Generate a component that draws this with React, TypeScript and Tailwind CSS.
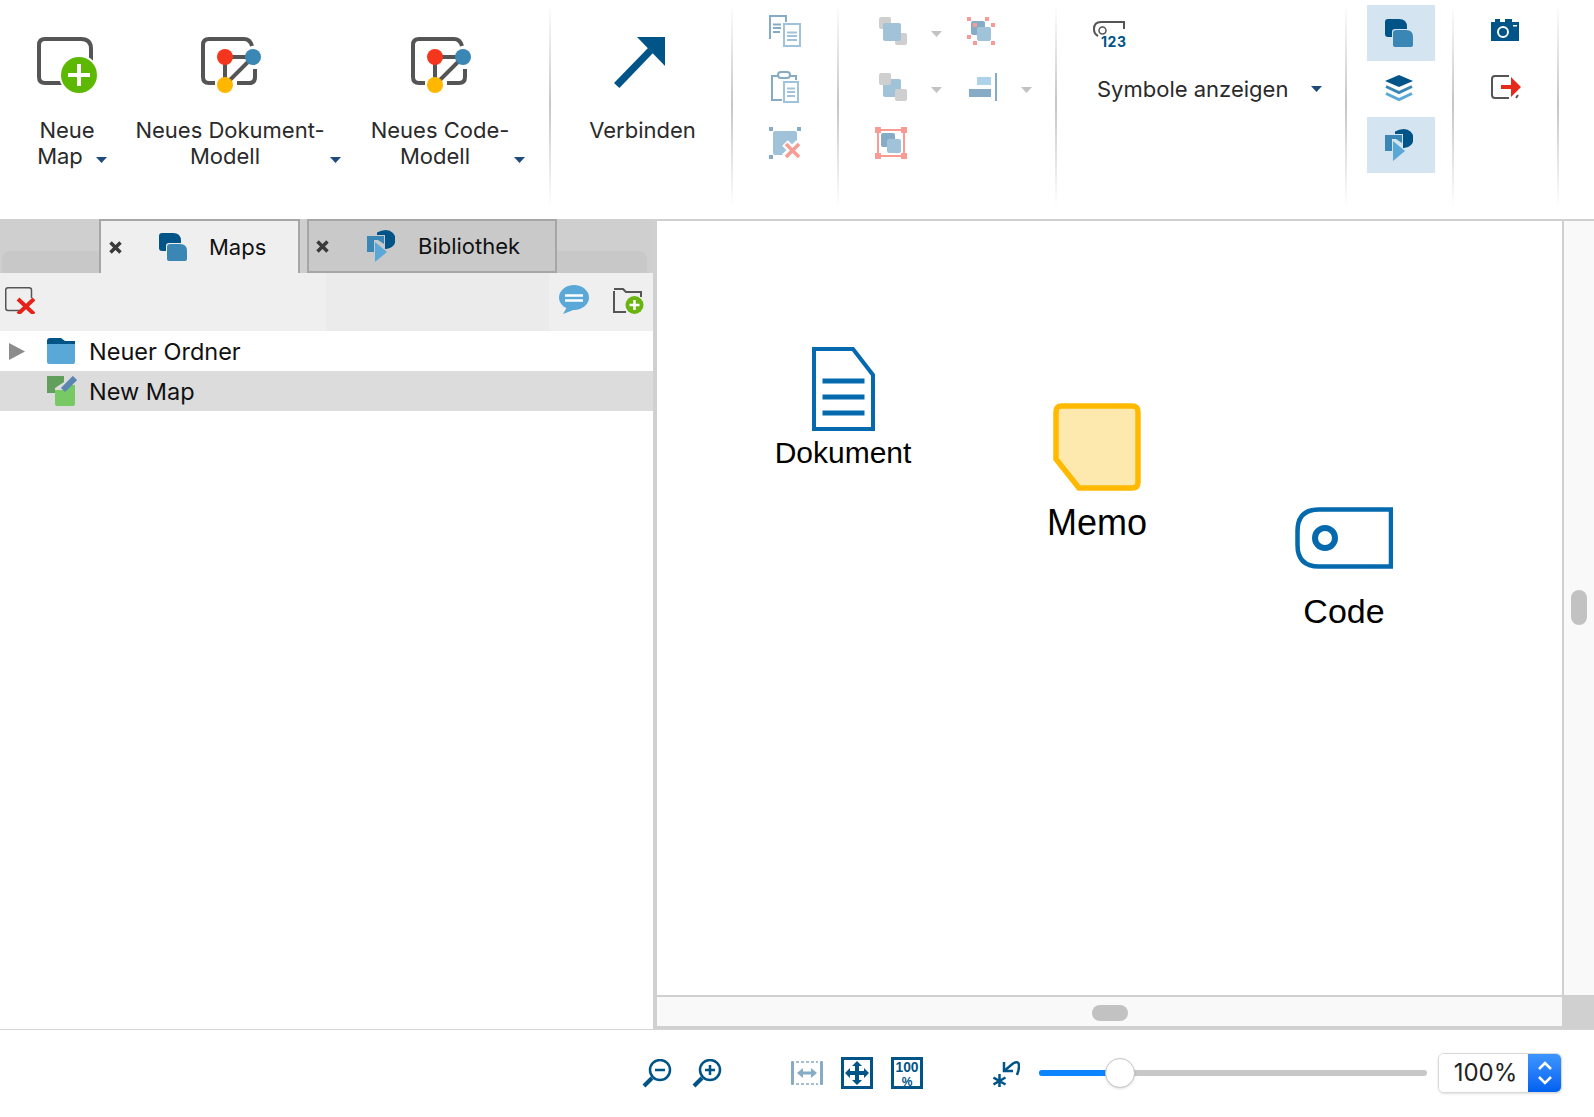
import type { ReactNode } from "react";

const navy = "#005487";
const mid = "#3a86b5";
const sky = "#5aa8d8";
const pale = "#a0c3da";
const dusk = "#86abc6";
const salmon = "#f79b94";
const grey = "#555555";

function Divider() {
  return <div className="w-[2px] h-[204px] mt-[3px] shrink-0 bg-linear-to-b from-white via-[#c6c6c6] to-white" />;
}

function Caret({ color = "#1f4a7c" }: { color?: string }) {
  return (
    <svg width="11" height="6" viewBox="0 0 11 6" className="block">
      <path d="M0 0H11L5.5 6Z" fill={color} />
    </svg>
  );
}

function NewMapIcon() {
  return (
    <svg width="60" height="56" viewBox="0 0 60 56" className="block">
      <path d="M10 46H8Q2 46 2 40V8Q2 2 8 2H44Q54 2 54 12V40Q54 46 48 46Z" fill="none" stroke={grey} strokeWidth="4" />
      <circle cx="42" cy="38" r="20" fill="#fff" />
      <circle cx="42" cy="38" r="18" fill="#5cb800" />
      <path d="M42 27V49M31 38H53" stroke="#fff" strokeWidth="4" />
    </svg>
  );
}

function ModelIcon() {
  return (
    <svg width="60" height="56" viewBox="0 0 60 56" className="block ml-[2px]">
      <path d="M51 9Q49 2 43 2H8Q2 2 2 8V40Q2 46 8 46H14" fill="none" stroke={grey} strokeWidth="4" />
      <path d="M36 46H48Q54 46 54 40V32" fill="none" stroke={grey} strokeWidth="4" />
      <path d="M24 20H52L24 48Z" fill="none" stroke={grey} strokeWidth="4" />
      <circle cx="24" cy="20" r="8" fill="#f4361f" />
      <circle cx="52" cy="20" r="8" fill={mid} />
      <circle cx="24" cy="48" r="8" fill="#ffb700" />
    </svg>
  );
}

function MapsIcon() {
  return (
    <svg width="28" height="28" viewBox="0 0 28 28" className="block">
      <path d="M0 3Q0 0 3 0H14Q22 0 22 8V10H10Q7 10 7 13V18H3Q0 18 0 15Z" fill={navy} />
      <path d="M8 14Q8 11 11 11H21Q28 11 28 18V26Q28 28 26 28H10Q8 28 8 26Z" fill={mid} />
    </svg>
  );
}

function LibraryIcon() {
  return (
    <svg width="28" height="32" viewBox="0 0 28 32" className="block">
      <path d="M10 2.500Q14 0 19 0A9.500 9.500 0 0 1 19 19H18V5H10Z" fill={navy} />
      <path d="M0 6H17V14L11 10H7V22H0Z" fill={mid} />
      <path d="M8 12L20 22L8 32Z" fill={sky} />
    </svg>
  );
}

function ToolLabel({ first, second, shift, caret }: { first: string; second: string; shift: number; caret: string }) {
  return (
    <div className="mt-[24px] text-center text-[22px] leading-[26px] text-[#2a2a2a] w-full">
      <div>{first}</div>
      <div className="relative">
        <span className={shift === 7 ? "pr-[14px]" : "pr-[10px]"}>{second}</span>
        <span className={`absolute top-[14px] ${caret}`}>
          <Caret />
        </span>
      </div>
    </div>
  );
}

function CreateSection() {
  return (
    <div className="w-[549px] shrink-0 flex pt-[37px]">
      <div className="w-[134px] flex flex-col items-center">
        <NewMapIcon />
        <ToolLabel first="Neue" second="Map" shift={7} caret="left-[96px]" />
      </div>
      <div className="w-[192px] flex flex-col items-center">
        <ModelIcon />
        <ToolLabel first="Neues Dokument-" second="Modell" shift={5} caret="left-[196px]" />
      </div>
      <div className="w-[196px] ml-[16px] flex flex-col items-center">
        <ModelIcon />
        <ToolLabel first="Neues Code-" second="Modell" shift={5} caret="left-[172px]" />
      </div>
    </div>
  );
}

function ConnectSection() {
  return (
    <div className="w-[180px] shrink-0 flex flex-col items-center pt-[37px]">
      <svg width="51" height="52" viewBox="0 0 51 52" className="block mr-[4px]">
        <path d="M23 0H51V29Z" fill={navy} />
        <path d="M0 46L5.400 51L39 16L34 11Z" fill={navy} />
      </svg>
      <div className="mt-[28px] ml-[3px] text-[22px] leading-[26px] text-[#2a2a2a]">Verbinden</div>
    </div>
  );
}

function ClipboardSection() {
  return (
    <div className="w-[104px] shrink-0 flex flex-col gap-[24px] pl-[36px] pt-[15px]">
      <svg width="32" height="32" viewBox="0 0 32 32" className="block">
        <path d="M1 24V1H17V7" fill="none" stroke={dusk} strokeWidth="2" />
        <path d="M4 9.500H12M4 13H12M4 17H11" stroke={dusk} strokeWidth="2" />
        <rect x="15" y="9" width="16" height="22" fill="#fff" stroke={pale} strokeWidth="2" />
        <path d="M18 17.500H28M18 21H28M18 25H28" stroke={pale} strokeWidth="2" />
      </svg>
      <svg width="32" height="32" viewBox="0 0 32 32" className="block">
        <path d="M13 29H3V5H27V9" fill="none" stroke={dusk} strokeWidth="2" />
        <rect x="9" y="1" width="12" height="6" rx="3" fill="#fff" stroke={dusk} strokeWidth="2" />
        <rect x="15" y="11" width="14" height="20" fill="#fff" stroke={pale} strokeWidth="2" />
        <path d="M18 17.500H26M18 21H26M18 25H26" stroke={pale} strokeWidth="2" />
      </svg>
      <svg width="32" height="32" viewBox="0 0 32 32" className="block">
        <path d="M0 0H4V4H0ZM28 0H32V4H28ZM0 28H4V32H0Z" fill={dusk} />
        <rect x="4" y="4" width="24" height="24" rx="2" fill={pale} />
        <path d="M16 16L30 30M30 16L16 30" stroke="#fff" strokeWidth="8" />
        <path d="M17 17L30 30M30 17L17 30" stroke={salmon} strokeWidth="3.500" />
      </svg>
    </div>
  );
}

function ArrangeSection() {
  return (
    <div className="w-[216px] shrink-0 pl-[40px] pt-[17px]">
      <div className="h-[56px] flex items-start">
        <svg width="28" height="28" viewBox="0 0 28 28" className="block">
          <rect width="12" height="12" rx="2" fill="#cfcfcf" />
          <rect x="16" y="16" width="12" height="12" rx="2" fill="#cfcfcf" />
          <rect x="4" y="6" width="18" height="18" rx="2" fill={pale} />
        </svg>
        <span className="ml-[24px] mt-[14px]">
          <Caret color="#c2c2c2" />
        </span>
        <svg width="28" height="28" viewBox="0 0 28 28" className="block ml-[25px]">
          <rect x="4" y="4" width="14" height="14" rx="2" fill={dusk} />
          <rect x="10" y="10" width="14" height="14" rx="2" fill={pale} />
          <path d="M0 0h4v4H0zM18 0h4v4h-4zM24 6h4v4h-4zM6 6h4v4H6zM0 18h4v4H0zM6 24h4v4H6zM24 24h4v4h-4z" fill={salmon} />
        </svg>
      </div>
      <div className="h-[56px] flex items-start">
        <svg width="28" height="28" viewBox="0 0 28 28" className="block">
          <rect x="4" y="6" width="18" height="18" rx="2" fill={pale} />
          <rect width="12" height="12" rx="2" fill="#cfcfcf" />
          <rect x="16" y="16" width="12" height="12" rx="2" fill="#cfcfcf" />
        </svg>
        <span className="ml-[24px] mt-[14px]">
          <Caret color="#c2c2c2" />
        </span>
        <svg width="28" height="28" viewBox="0 0 28 28" className="block ml-[27px]">
          <rect x="8" y="4" width="14" height="8" fill="#aed2ea" />
          <rect y="16" width="22" height="8" fill={dusk} />
          <rect x="26" width="2" height="28" fill={dusk} />
        </svg>
        <span className="ml-[24px] mt-[14px]">
          <Caret color="#c2c2c2" />
        </span>
      </div>
      <svg width="32" height="32" viewBox="0 0 32 32" className="block -mt-[2px] -ml-[4px]">
        <rect x="3" y="3" width="26" height="26" fill="none" stroke={salmon} strokeWidth="2" />
        <path d="M0 0h6v6H0zM26 0h6v6h-6zM0 26h6v6H0zM26 26h6v6h-6z" fill={salmon} />
        <rect x="6" y="6" width="14" height="14" rx="2" fill={dusk} />
        <rect x="12" y="12" width="14" height="14" rx="2" fill={pale} />
      </svg>
    </div>
  );
}

function SymbolsSection() {
  return (
    <div className="w-[288px] shrink-0 pt-[21px]">
      <svg width="40" height="31" viewBox="0 0 40 31" className="block ml-[36px]">
        <path d="M31 8V1H8Q1 1 1 8Q1 13 5 15" fill="none" stroke={grey} strokeWidth="2" />
        <circle cx="9.500" cy="9.500" r="3.500" fill="none" stroke={grey} strokeWidth="1.500" />
        <text x="8" y="26" fontSize="14" fontWeight="700" fill={navy} fontFamily="Inter, sans-serif" textLength="25">
          123
        </text>
      </svg>
      <div className="mt-[24px] ml-[40px] flex items-center text-[22px] leading-[26px] text-[#2a2a2a]">
        <span>Symbole anzeigen</span>
        <span className="ml-[23px]">
          <Caret />
        </span>
      </div>
    </div>
  );
}

function ViewSection() {
  return (
    <div className="w-[105px] shrink-0 pl-[20px] pt-[5px]">
      <div className="w-[68px] h-[56px] bg-[#d4e4f1] flex items-center justify-center pr-[4px]">
        <MapsIcon />
      </div>
      <div className="w-[68px] h-[56px] flex items-center justify-center pr-[4px]">
        <svg width="28" height="28" viewBox="0 0 28 28" className="block">
          <path d="M14 0L28 6L14 12L0 6Z" fill={navy} />
          <path d="M1 11.500L14 17.500L27 11.500" fill="none" stroke={mid} strokeWidth="3" />
          <path d="M1 18.500L14 24.500L27 18.500" fill="none" stroke={sky} strokeWidth="3" />
        </svg>
      </div>
      <div className="w-[68px] h-[56px] bg-[#d4e4f1] flex items-center justify-center pr-[4px]">
        <LibraryIcon />
      </div>
    </div>
  );
}

function OutputSection() {
  return (
    <div className="w-[103px] shrink-0 pl-[37px] pt-[19px]">
      <svg width="28" height="22" viewBox="0 0 28 22" className="block">
        <path d="M0 3H4V0H9V3H14V0H21V3H28V22H0Z" fill={navy} />
        <circle cx="12" cy="13" r="5" fill="none" stroke="#fff" strokeWidth="2" />
        <rect x="22" y="6" width="4" height="1.500" fill="#fff" />
      </svg>
      <svg width="30" height="24" viewBox="0 0 30 24" className="block mt-[34px]">
        <path d="M18 1H4Q1 1 1 4V20Q1 23 4 23H18M25 23L27 20" fill="none" stroke={grey} strokeWidth="2" />
        <path d="M10 10H20V2L30 12L20 22V14H10Z" fill="#e52a1c" />
      </svg>
    </div>
  );
}

function Toolbar() {
  return (
    <div className="h-[219px] shrink-0 flex bg-white">
      <CreateSection />
      <Divider />
      <ConnectSection />
      <Divider />
      <ClipboardSection />
      <Divider />
      <ArrangeSection />
      <Divider />
      <SymbolsSection />
      <Divider />
      <ViewSection />
      <Divider />
      <OutputSection />
      <Divider />
    </div>
  );
}

function CloseMark() {
  return (
    <svg width="13" height="13" viewBox="0 0 13 13" className="block shrink-0">
      <path d="M1.500 1.500L11.500 11.500M11.500 1.500L1.500 11.500" stroke="#3a3a3a" strokeWidth="3.500" />
    </svg>
  );
}

function Tab({ label, icon, active, className }: { label: string; icon: ReactNode; active?: boolean; className: string }) {
  return (
    <div
      className={`h-[54px] shrink-0 flex items-center border-[2px] border-[#a6a6a6] ${
        active ? "bg-[#efefef] border-b-0" : "bg-[#c9c9c9]"
      } ${className}`}
    >
      <CloseMark />
      {icon}
      <span className="text-[22px] leading-[26px] text-[#111]">{label}</span>
    </div>
  );
}

function LeftPanel() {
  return (
    <div className="w-[653px] shrink-0 flex flex-col bg-white">
      <div className="h-[54px] shrink-0 flex items-end bg-[#cfcfcf]">
        <div className="w-[97px] h-[22px] ml-[2px] mr-[0px] rounded-tl-lg bg-[#c8c8c8] shrink-0" />
        <Tab
          label="Maps"
          active
          className="w-[201px] pl-[8px]"
          icon={
            <span className="ml-[37px] mr-[22px]">
              <MapsIcon />
            </span>
          }
        />
        <div className="w-[7px] shrink-0" />
        <Tab
          label="Bibliothek"
          className="w-[250px] pl-[7px]"
          icon={
            <span className="ml-[38px] mr-[23px]">
              <LibraryIcon />
            </span>
          }
        />
        <div className="w-[90px] h-[22px] rounded-tr-lg bg-[#c8c8c8] shrink-0" />
      </div>
      <div className="h-[58px] shrink-0 flex bg-[#efefef]">
        <div className="w-[326px] pl-[5px] pt-[14px]">
          <svg width="30" height="27" viewBox="0 0 30 27" className="block">
            <path d="M16 23.500H3Q.75 23.500 .75 21V3Q.75 .75 3 .75H24Q26.500 .75 26.500 3V11" fill="none" stroke={grey} strokeWidth="1.500" />
            <path d="M13 12L29 27M29 12L13 27" stroke="#e8201a" strokeWidth="4" />
          </svg>
        </div>
        <div className="w-[223px] bg-[#ebebeb]" />
        <div className="flex-1 flex pl-[10px] pt-[12px]">
          <svg width="30" height="29" viewBox="0 0 30 29" className="block">
            <ellipse cx="15" cy="12.500" rx="15" ry="12.500" fill={sky} />
            <path d="M8 22L4 29L17 24Z" fill={sky} />
            <path d="M6 10.500H24M6 15.500H24" stroke="#fff" strokeWidth="2.500" />
          </svg>
          <svg width="31" height="27" viewBox="0 0 31 27" className="block ml-[24px] mt-[2px]">
            <path d="M1 4V25H13M28 10V5H13L10 2H1" fill="none" stroke={grey} strokeWidth="2" />
            <circle cx="21.500" cy="18" r="9" fill="#69b40f" />
            <path d="M21.500 13V23M16.500 18H26.500" stroke="#fff" strokeWidth="2.500" />
          </svg>
        </div>
      </div>
      <div className="h-[40px] shrink-0 flex items-center">
        <svg width="16" height="17" viewBox="0 0 16 17" className="block ml-[9px]">
          <path d="M0 0L16 8.500L0 17Z" fill="#8c8c8c" />
        </svg>
        <svg width="28" height="26" viewBox="0 0 28 26" className="block ml-[22px]">
          <path d="M0 3Q0 0 3 0H14L18 3H28V7H0Z" fill={navy} />
          <path d="M0 6H28V24Q28 26 26 26H2Q0 26 0 24Z" fill={sky} />
        </svg>
        <span className="ml-[14px] pt-[2px] text-[23.500px] leading-[28px] text-[#111]">Neuer Ordner</span>
      </div>
      <div className="h-[40px] shrink-0 flex items-center bg-[#dcdcdc]">
        <svg width="30" height="30" viewBox="0 0 30 30" className="block ml-[47px]">
          <path d="M0 0H17V6L8 12V17H0Z" fill="#639f5c" />
          <path d="M8 14H15L21 9H28V28Q28 30 26 30H10Q8 30 8 28Z" fill="#76c963" />
          <path d="M28 2L16 14" stroke="#5b86b3" strokeWidth="6" />
        </svg>
        <span className="ml-[12px] pt-[2px] text-[23.500px] leading-[28px] text-[#111]">New Map</span>
      </div>
      <div className="flex-1" />
    </div>
  );
}

function MapNode({ label, icon, className, labelClass }: { label: string; icon: ReactNode; className: string; labelClass: string }) {
  return (
    <div className={`absolute flex flex-col items-center font-['Liberation_Sans',sans-serif] text-black leading-none ${className}`}>
      {icon}
      <div className={labelClass}>{label}</div>
    </div>
  );
}

function Canvas() {
  return (
    <div className="flex-1 flex flex-col min-w-0">
      <div className="h-[2px] shrink-0 bg-[#d0d0d0]" />
      <div className="flex-1 flex min-h-0">
        <div className="relative flex-1 bg-white">
          <MapNode
            label="Dokument"
            className="left-[118px] top-[126px] w-[136px]"
            labelClass="mt-[7px] text-[30px]"
            icon={
              <svg width="63" height="84" viewBox="0 0 63 84" className="block">
                <path d="M2 2H41L61 28V82H2Z" fill="#fff" stroke="#0569ad" strokeWidth="4" />
                <path d="M10.500 34H52.500M10.500 50H52.500M10.500 66H52.500" stroke="#0569ad" strokeWidth="5" />
              </svg>
            }
          />
          <MapNode
            label="Memo"
            className="left-[390px] top-[182px] w-[100px]"
            labelClass="mt-[14px] text-[36px]"
            icon={
              <svg width="88" height="88" viewBox="0 0 88 88" className="block">
                <path d="M9 3H79Q85 3 85 9V79Q85 85 79 85H26L3 56V9Q3 3 9 3Z" fill="#fde9ad" stroke="#ffb900" strokeWidth="5.500" />
              </svg>
            }
          />
          <MapNode
            label="Code"
            className="left-[638px] top-[286px] w-[98px]"
            labelClass="mt-[25px] text-[34px]"
            icon={
              <svg width="98" height="62" viewBox="0 0 98 62" className="block">
                <path d="M96 2.500H24Q2.500 2.500 2.500 24V38Q2.500 59.500 24 59.500H96Z" fill="#fff" stroke="#0569ad" strokeWidth="4.500" />
                <circle cx="30" cy="31" r="10" fill="#fff" stroke="#0569ad" strokeWidth="6" />
              </svg>
            }
          />
        </div>
        <div className="w-[32px] shrink-0 bg-[#f9f9f9] border-l-[2px] border-[#d0d0d0] relative">
          <div className="absolute left-[7px] top-[369px] w-[16px] h-[35px] rounded-lg bg-[#c2c2c2]" />
        </div>
      </div>
      <div className="h-[34px] shrink-0 flex">
        <div className="flex-1 flex flex-col">
          <div className="h-[2px] bg-[#d0d0d0]" />
          <div className="flex-1 bg-[#f9f9f9] flex items-center pl-[435px] pt-[2px]">
            <div className="w-[36px] h-[16px] rounded-lg bg-[#c2c2c2]" />
          </div>
          <div className="h-[3px] bg-[#d0d0d0]" />
        </div>
        <div className="w-[32px] bg-[#d0d0d0]" />
      </div>
    </div>
  );
}

function Footer() {
  return (
    <div className="flex-1 flex items-center border-t-[1px] border-[#d4d4d4] bg-white pl-[642px] pb-[1px]">
      <svg width="30" height="29" viewBox="0 0 30 29" className="block">
        <circle cx="18" cy="11" r="10" fill="none" stroke={navy} strokeWidth="2.500" />
        <path d="M13 11H23" stroke={navy} strokeWidth="2.500" />
        <path d="M2 27L10 19" stroke={navy} strokeWidth="4" />
      </svg>
      <svg width="30" height="29" viewBox="0 0 30 29" className="block ml-[20px]">
        <circle cx="18" cy="11" r="10" fill="none" stroke={navy} strokeWidth="2.500" />
        <path d="M13 11H23M18 6V16" stroke={navy} strokeWidth="2.500" />
        <path d="M2 27L10 19" stroke={navy} strokeWidth="4" />
      </svg>
      <svg width="32" height="24" viewBox="0 0 32 24" className="block ml-[69px]">
        <rect width="3" height="24" rx="1" fill={dusk} />
        <rect x="29" width="3" height="24" rx="1" fill={dusk} />
        <path d="M5 1H27M5 23H27" stroke={dusk} strokeWidth="1.500" strokeDasharray="3 2" />
        <path d="M6 12L12 7V10.500H20V7L26 12L20 17V13.500H12V17Z" fill={dusk} />
      </svg>
      <svg width="32" height="32" viewBox="0 0 32 32" className="block ml-[18px]">
        <rect x="1.500" y="1.500" width="29" height="29" fill="none" stroke={navy} strokeWidth="3" />
        <path d="M16 4L21 9H18V14H23V11L28 16L23 21V18H18V23H21L16 28L11 23H14V18H9V21L4 16L9 11V14H14V9H11Z" fill={navy} />
      </svg>
      <svg width="32" height="32" viewBox="0 0 32 32" className="block ml-[18px]">
        <rect x="1.500" y="1.500" width="29" height="29" fill="none" stroke={navy} strokeWidth="3" />
        <text x="4.500" y="15" fontSize="14" fontWeight="700" fill={navy} fontFamily="Liberation Sans, sans-serif" textLength="23" lengthAdjust="spacingAndGlyphs">
          100
        </text>
        <text x="16" y="28.500" textAnchor="middle" fontSize="12" fontWeight="700" fill={navy} fontFamily="Liberation Sans, sans-serif">
          %
        </text>
      </svg>
      <svg width="27" height="27" viewBox="0 0 27 27" className="block ml-[70px]">
        <path d="M6.500 14V28M.5 17.500L12.500 24.500M12.500 17.500L.5 24.500" stroke={navy} strokeWidth="2.500" />
        <path d="M11 11L20 3.500Q26 0 26 6Q26 10 24 15" fill="none" stroke={navy} strokeWidth="2.500" />
        <path d="M11 2V11H20" fill="none" stroke={navy} strokeWidth="2.500" />
      </svg>
      <div className="relative w-[388px] h-[6px] ml-[19px] rounded-full bg-[#c8c8c8]">
        <div className="h-full w-[70px] rounded-l-full bg-[#0a84ff]" />
        <div className="absolute left-[66px] -top-[12px] w-[30px] h-[30px] rounded-full bg-white border-[1px] border-[#c4c4c4] shadow-sm" />
      </div>
      <div className="ml-[11px] w-[124px] h-[40px] flex rounded-[6px] border-[1px] border-[#d8d8d8] shadow-sm overflow-hidden">
        <div className="flex-1 flex items-center justify-center text-[24px] text-[#222] pl-[4px] bg-white">100%</div>
        <div className="w-[33px] flex items-center justify-center bg-linear-to-b from-[#3d95ff] to-[#0060f0]">
          <svg width="16" height="28" viewBox="0 0 16 28" className="block">
            <path d="M2 10L8 4L14 10M2 18L8 24L14 18" fill="none" stroke="#fff" strokeWidth="2.500" />
          </svg>
        </div>
      </div>
    </div>
  );
}

export default function App() {
  return (
    <div className="h-[1117px] w-full flex flex-col overflow-hidden bg-white font-['Inter',sans-serif]">
      <Toolbar />
      <div className="h-[810px] shrink-0 flex">
        <LeftPanel />
        <div className="w-[4px] shrink-0 bg-[#d0d0d0]" />
        <Canvas />
      </div>
      <Footer />
    </div>
  );
}
